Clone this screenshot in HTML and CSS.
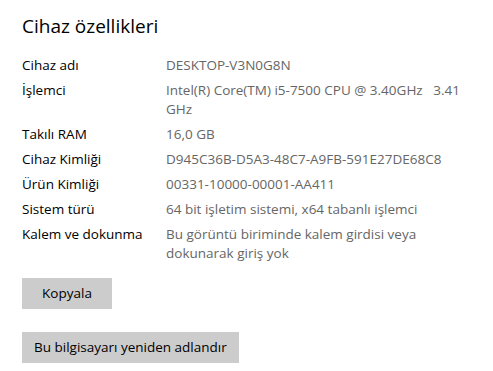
FILE: index.html
```html
<!DOCTYPE html>
<html lang="tr">
<head>
<meta charset="utf-8">
<title>Cihaz özellikleri</title>
<link rel="stylesheet" href="styles.css">
</head>
<body>
<main class="page">
  <h1 class="title">Cihaz özellikleri</h1>
  <dl class="specs">
    <dt>Cihaz adı</dt><dd>DESKTOP-V3N0G8N</dd>
    <dt>İşlemci</dt><dd>Intel(R) Core(TM) i5-7500 CPU @ 3.40GHz&nbsp;&nbsp; 3.41<br>GHz</dd>
    <dt>Takılı RAM</dt><dd>16,0 GB</dd>
    <dt>Cihaz Kimliği</dt><dd>D945C36B-D5A3-48C7-A9FB-591E27DE68C8</dd>
    <dt>Ürün Kimliği</dt><dd>00331-10000-00001-AA411</dd>
    <dt>Sistem türü</dt><dd>64 bit işletim sistemi, x64 tabanlı işlemci</dd>
    <dt>Kalem ve dokunma</dt><dd>Bu görüntü biriminde kalem girdisi veya<br>dokunarak giriş yok</dd>
  </dl>
  <div class="actions">
    <button class="btn btn-copy" type="button">Kopyala</button>
    <button class="btn" type="button">Bu bilgisayarı yeniden adlandır</button>
  </div>
</main>
</body>
</html>
```

FILE: styles.css
```css
html, body {
  margin: 0;
  padding: 0;
  background: #ffffff;
}

body {
  font-family: "Open Sans", "Noto Sans", "Liberation Sans", sans-serif;
  font-size: 13.5px;
  color: #000000;
}

.page {
  padding: 12px 22px 0 22px;
}

.title {
  margin: 0;
  font-size: 19px;
  font-weight: 400;
  line-height: 28px;
}

.specs {
  display: grid;
  grid-template-columns: 144px auto;
  row-gap: 6px;
  margin: 16px 0 0 0;
  line-height: 19px;
}

.specs dt,
.specs dd {
  margin: 0;
  white-space: nowrap;
}

.specs dd {
  color: #666666;
}

.actions {
  display: flex;
  flex-direction: column;
  align-items: flex-start;
  gap: 23px;
  margin-top: 15px;
}

.btn {
  font: inherit;
  color: #000000;
  background: #cccccc;
  border: 0;
  border-radius: 0;
  height: 31px;
  padding: 0 12px;
  line-height: 31px;
}

.btn-copy {
  min-width: 90px;
}
```
